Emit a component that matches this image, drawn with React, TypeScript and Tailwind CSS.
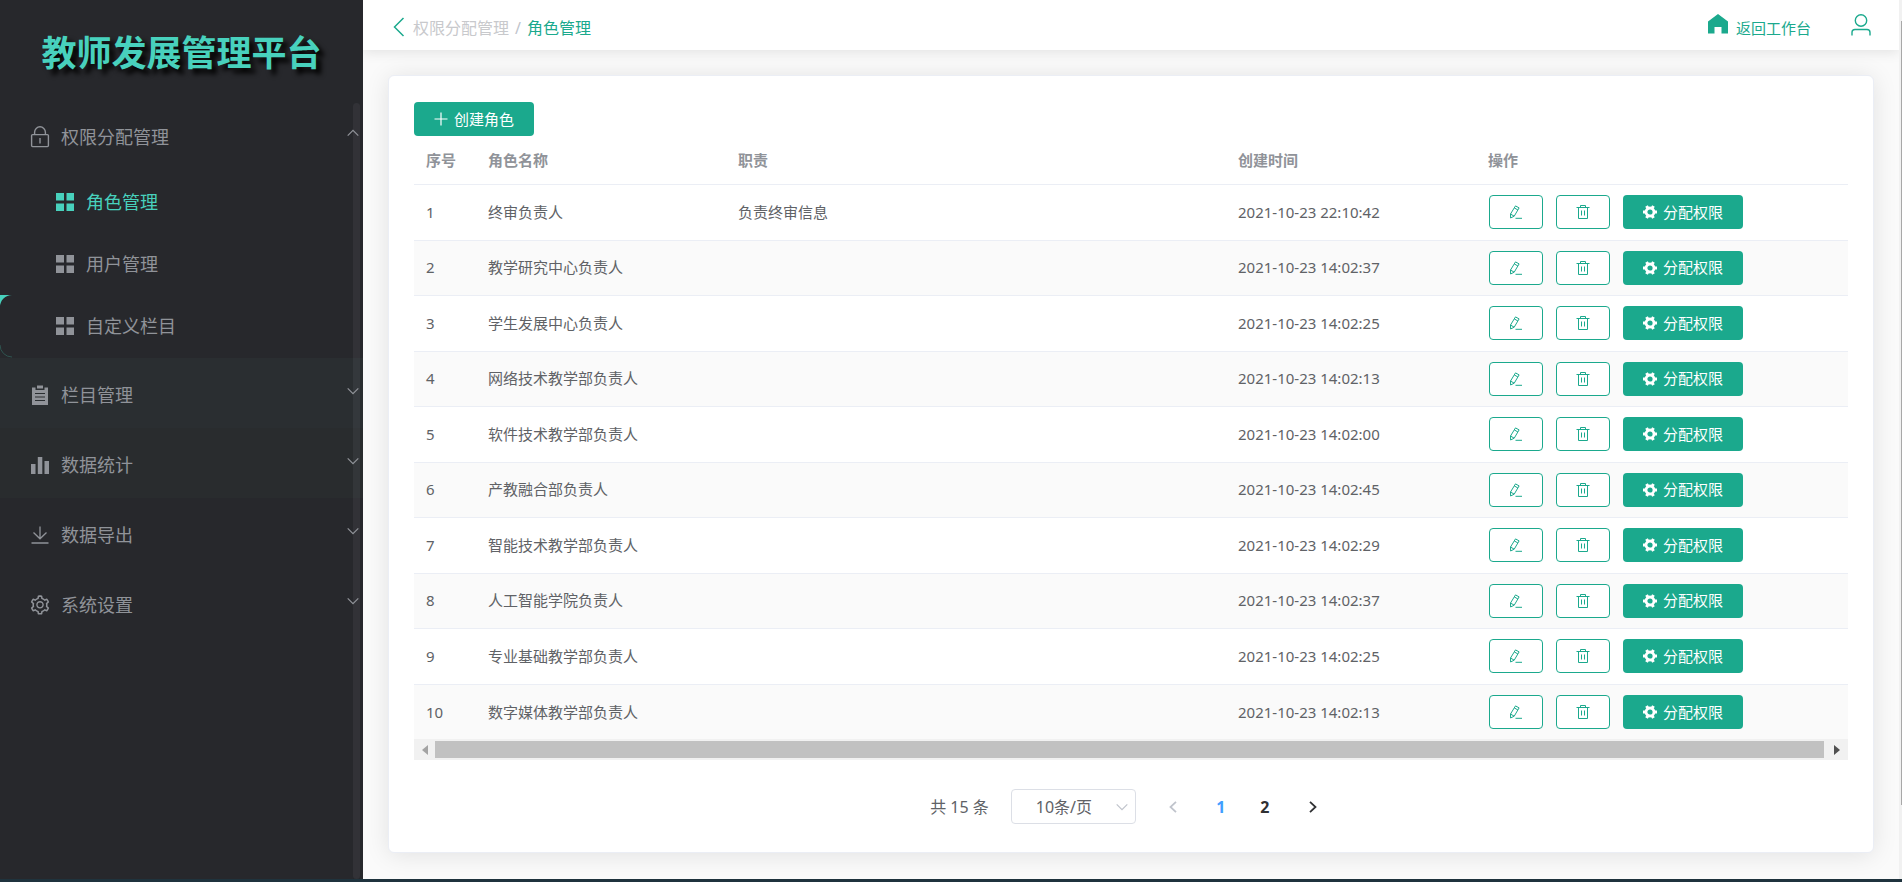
import type { ReactNode } from "react";
import { AiOutlineSetting } from "react-icons/ai";

interface Role {
  id: number;
  name: string;
  duty: string;
  createdAt: string;
}

const roles: Role[] = [
  { id: 1, name: "终审负责人", duty: "负责终审信息", createdAt: "2021-10-23 22:10:42" },
  { id: 2, name: "教学研究中心负责人", duty: "", createdAt: "2021-10-23 14:02:37" },
  { id: 3, name: "学生发展中心负责人", duty: "", createdAt: "2021-10-23 14:02:25" },
  { id: 4, name: "网络技术教学部负责人", duty: "", createdAt: "2021-10-23 14:02:13" },
  { id: 5, name: "软件技术教学部负责人", duty: "", createdAt: "2021-10-23 14:02:00" },
  { id: 6, name: "产教融合部负责人", duty: "", createdAt: "2021-10-23 14:02:45" },
  { id: 7, name: "智能技术教学部负责人", duty: "", createdAt: "2021-10-23 14:02:29" },
  { id: 8, name: "人工智能学院负责人", duty: "", createdAt: "2021-10-23 14:02:37" },
  { id: 9, name: "专业基础教学部负责人", duty: "", createdAt: "2021-10-23 14:02:25" },
  { id: 10, name: "数字媒体教学部负责人", duty: "", createdAt: "2021-10-23 14:02:13" },
];

function LockIcon() {
  return (
    <svg width="20" height="22" viewBox="0 0 20 22" fill="none" stroke="currentColor" strokeWidth="1.4">
      <rect x="1.6" y="8.6" width="16.8" height="12" rx="1" />
      <path d="M4.6 8.5V6.2a5.4 5.4 0 0 1 10.8 0v2.3M10 12v5.5" />
    </svg>
  );
}

function GridIcon() {
  return (
    <svg width="18" height="18" viewBox="0 0 18 18" fill="currentColor">
      <path d="M0 0h8v7.5H0zM10.5 0H18v7.5h-7.5zM0 10.5h8V18H0zM10.5 10.5H18V18h-7.5z" />
    </svg>
  );
}

function ClipboardIcon() {
  return (
    <svg width="20" height="20" viewBox="0 0 20 20">
      <path d="M2 2.5h3.5V5h9V2.5H18V20H2z" fill="currentColor" />
      <path d="M7 .5h6v3H7z" fill="currentColor" />
      <path d="M5 8.5h10M5 12h10M5 15.5h10" stroke="#2a2e31" strokeWidth="1.2" />
    </svg>
  );
}

function BarsIcon() {
  return (
    <svg width="20" height="20" viewBox="0 0 20 20" fill="currentColor">
      <path d="M1 9h4.5v10H1zM7.8 2h4.5v17H7.8zM14.5 6H19v13h-4.5z" />
    </svg>
  );
}

function DownloadIcon() {
  return (
    <svg width="20" height="20" viewBox="0 0 20 20" fill="none" stroke="currentColor" strokeWidth="1.3">
      <path d="M10 1.5v12M3.5 7.5l6.5 6.3 6.5-6.3M1.5 18h17" />
    </svg>
  );
}

function Chevron({ up = false }: { up?: boolean }) {
  return (
    <svg width="12" height="8" viewBox="0 0 12 8" fill="none" stroke="currentColor" strokeWidth="1.2">
      <path d={up ? "M.7 6.7 6 1.3l5.3 5.4" : "M.7 1.3 6 6.7l5.3-5.4"} />
    </svg>
  );
}

function EditIcon() {
  return (
    <svg width="14" height="14" viewBox="0 0 14 14" fill="none" stroke="currentColor" strokeLinejoin="round">
      <path d="M6.5.9 10.1 2.9 5.2 11.2 1.6 13l-.1-4zM5.3 2.9l3.6 2.1M1.6 9.1l3.5 2M6.5 13.3H13" />
    </svg>
  );
}

function TrashIcon() {
  return (
    <svg width="14" height="14" viewBox="0 0 14 14" fill="none" stroke="currentColor">
      <path d="M.5 2.5h13M4.500 2.500v-2h5v2M2.500 2.500v11h9v-11M5.500 5.500v5M8.500 5.500v5" />
    </svg>
  );
}

function GearIcon() {
  return (
    <svg width="14" height="14" viewBox="0 0 14 14" fill="none" stroke="currentColor">
      <circle cx="7" cy="7" r="4" strokeWidth="2.8" />
      <path
        d="M0 7h2.5M11.5 7H14M3.5.9l1.3 2.2M9.2 10.9l1.3 2.2M10.5.9 9.2 3.1M4.8 10.9l-1.3 2.2"
        strokeWidth="3"
      />
    </svg>
  );
}

interface MenuItemProps {
  icon: ReactNode;
  label: string;
  open?: boolean;
  tone?: string;
}

function MenuItem({ icon, label, open = false, tone = "" }: MenuItemProps) {
  return (
    <button
      type="button"
      aria-expanded={open}
      className={`flex h-[70px] w-full items-center pl-[30px] pr-1 pt-1 text-[18px] text-[#909399] ${tone}`}
    >
      <span className="mr-[11px] flex w-5 justify-center">{icon}</span>
      {label}
      <span className="mb-2 ml-auto">
        <Chevron up={open} />
      </span>
    </button>
  );
}

function SubMenuItem({ label, active = false }: { label: string; active?: boolean }) {
  return (
    <a
      href="#"
      className={`flex h-[62px] items-center gap-3 pl-14 text-[18px] ${active ? "text-[#48d1bd]" : "text-[#909399]"}`}
    >
      <GridIcon />
      {label}
    </a>
  );
}

function Sidebar() {
  return (
    <aside className="relative w-[363px] shrink-0 bg-[#27282c]">
      <h1 className="flex h-[100px] items-center justify-center pt-1.5 text-[35px] font-bold text-[#48d1bd] [text-shadow:5px_5px_5px_#000]">
        教师发展管理平台
      </h1>
      <nav>
        <MenuItem icon={<LockIcon />} label="权限分配管理" open />
        <div className="py-px">
          <SubMenuItem label="角色管理" active />
          <SubMenuItem label="用户管理" />
          <div className="relative">
            <svg className="absolute left-0 top-0" width="12" height="63" viewBox="0 0 12 63" fill="none">
              <path d="M0 0h12A12 12 0 0 0 0 12z" fill="#48d1bd" />
              <path d="M0 50a12 12 0 0 0 12 12" stroke="#2f5450" />
            </svg>
            <SubMenuItem label="自定义栏目" />
          </div>
        </div>
        <MenuItem icon={<ClipboardIcon />} label="栏目管理" tone="bg-[#2a2e31]" />
        <MenuItem icon={<BarsIcon />} label="数据统计" tone="bg-[#292c2e]" />
        <MenuItem icon={<DownloadIcon />} label="数据导出" />
        <MenuItem icon={<AiOutlineSetting size={22} className="shrink-0" />} label="系统设置" />
      </nav>
      <div className="absolute bottom-0 right-[3px] top-[103px] w-[7px] rounded-full bg-[#909399]/10" />
    </aside>
  );
}

function Header() {
  return (
    <header className="flex h-[50px] shrink-0 items-center bg-white pl-[30px] pr-7 pt-1 text-[#1ba98d] shadow-[0_2px_12px_rgba(0,0,0,0.1)]">
      <button type="button" aria-label="返回" className="mr-2">
        <svg width="12" height="20" viewBox="0 0 12 20" fill="none" stroke="currentColor" strokeWidth="1.5">
          <path d="M10.5 1 1.5 10l9 9" />
        </svg>
      </button>
      <nav className="mt-0.5 flex gap-1.5 text-base">
        <a href="#" className="text-[#c8c9cc]">
          权限分配管理
        </a>
        <span className="text-[#c0c4cc]">/</span>
        <span>角色管理</span>
      </nav>
      <a href="#" className="ml-auto flex items-center gap-2 text-[15px]">
        <svg width="20" height="20" viewBox="0 0 20 20" fill="currentColor" className="mb-1.5">
          <path d="M10 0 20 7.5v12h-6.5V13h-7v6.5H0v-12z" />
        </svg>
        <span className="mt-0.5">返回工作台</span>
      </a>
      <button type="button" aria-label="个人中心" className="mb-1 ml-10">
        <svg width="20" height="22" viewBox="0 0 20 22" fill="none" stroke="currentColor" strokeWidth="1.4">
          <circle cx="10" cy="6.5" r="5.7" />
          <path d="M1 21.5v-3a3 3 0 0 1 3-3h12a3 3 0 0 1 3 3v3" />
        </svg>
      </button>
    </header>
  );
}

function RoleTable() {
  return (
    <table className="w-full table-fixed border-collapse text-left text-[15px] text-[#606266]">
      <thead>
        <tr className="h-12 border-b border-[#ebeef5] text-[#909399]">
          <th className="w-[62px] pl-3">序号</th>
          <th className="w-[250px] pl-3">角色名称</th>
          <th className="w-[500px] pl-3">职责</th>
          <th className="w-[250px] pl-3">创建时间</th>
          <th className="pl-3">操作</th>
        </tr>
      </thead>
      <tbody>
        {roles.map((role) => (
          <tr
            key={role.id}
            className="h-14 border-b border-[#ebeef5] last:border-b-0 even:h-[55px] even:bg-[#fafafa]"
          >
            <td className="pl-3">{role.id}</td>
            <td className="pl-3">{role.name}</td>
            <td className="pl-3">{role.duty}</td>
            <td className="pl-3">{role.createdAt}</td>
            <td className="pl-[13px]">
              <div className="flex gap-[13px] text-[#1ba98d]">
                <button
                  type="button"
                  aria-label="编辑"
                  className="flex h-[34px] w-[54px] items-center justify-center rounded border border-current bg-white"
                >
                  <EditIcon />
                </button>
                <button
                  type="button"
                  aria-label="删除"
                  className="flex h-[34px] w-[54px] items-center justify-center rounded border border-current bg-white"
                >
                  <TrashIcon />
                </button>
                <button
                  type="button"
                  className="flex h-[34px] w-[120px] items-center justify-center gap-1.5 rounded bg-[#1ba98d] text-white"
                >
                  <GearIcon />
                  分配权限
                </button>
              </div>
            </td>
          </tr>
        ))}
      </tbody>
    </table>
  );
}

function TableScrollbar() {
  return (
    <div className="flex h-[21px] items-center bg-[#f1f1f1]">
      <span className="flex w-[21px] justify-center">
        <svg width="6" height="10" viewBox="0 0 6 10" fill="#a3a3a3">
          <path d="M6 0v10L0 5z" />
        </svg>
      </span>
      <span className="h-[17px] flex-1 bg-[#c1c1c1]" />
      <span className="flex w-6 justify-center pl-0.5">
        <svg width="6" height="10" viewBox="0 0 6 10" fill="#505050">
          <path d="M0 0v10l6-5z" />
        </svg>
      </span>
    </div>
  );
}

function Pagination() {
  return (
    <div className="mt-[29px] flex h-[35px] items-center justify-center pl-[3px] text-base text-[#606266]">
      <span>共 15 条</span>
      <div className="relative ml-[22px] mr-[15px]">
        <select
          aria-label="每页条数"
          className="h-[35px] w-[125px] appearance-none rounded border border-[#dcdfe6] bg-white pl-6"
        >
          <option>10条/页</option>
          <option>20条/页</option>
        </select>
        <span className="pointer-events-none absolute right-2 top-1/2 -translate-y-1/2 text-[#c0c4cc]">
          <Chevron />
        </span>
      </div>
      <button type="button" aria-label="上一页" disabled className="flex w-11 justify-center text-[#c0c4cc]">
        <svg width="8" height="12" viewBox="0 0 8 12" fill="none" stroke="currentColor" strokeWidth="1.8">
          <path d="M7 .8 1.5 6 7 11.2" />
        </svg>
      </button>
      <button type="button" className="ml-1 w-11 font-bold text-[#409eff]">
        1
      </button>
      <button type="button" className="w-11 font-bold text-[#303133]">
        2
      </button>
      <button type="button" aria-label="下一页" className="ml-1 flex w-11 justify-center text-[#303133]">
        <svg width="8" height="12" viewBox="0 0 8 12" fill="none" stroke="currentColor" strokeWidth="1.8">
          <path d="M1 .8 6.5 6 1 11.2" />
        </svg>
      </button>
    </div>
  );
}

export default function App() {
  return (
    <div className="flex min-h-screen flex-col bg-[#1f333d] font-['Noto_Sans','Noto_Sans_CJK_SC',sans-serif]">
      <div className="mb-[3px] flex flex-1">
        <Sidebar />
        <div className="flex min-w-0 flex-1 flex-col bg-[#fafafa]">
          <Header />
          <main className="mx-[25px] mb-[26px] mt-[25px] flex-1 rounded-md border border-[#ebeef5] bg-white px-[25px] pt-[26px] shadow-[0_2px_24px_rgba(0,0,0,0.1)]">
            <button
              type="button"
              className="flex h-[34px] w-[120px] items-center justify-center gap-1.5 rounded-sm bg-[#1ba98d] text-[15px] text-white"
            >
              <svg width="14" height="14" viewBox="0 0 14 14" stroke="currentColor" strokeWidth="1.2">
                <path d="M7 .5v13M.5 7h13" />
              </svg>
              创建角色
            </button>
            <RoleTable />
            <TableScrollbar />
            <Pagination />
          </main>
        </div>
        <div className="w-[3px] bg-[#f1f1f1] pt-[21px]">
          <div className="ml-auto h-[784px] w-px bg-[#a8a8a8]" />
        </div>
      </div>
    </div>
  );
}
